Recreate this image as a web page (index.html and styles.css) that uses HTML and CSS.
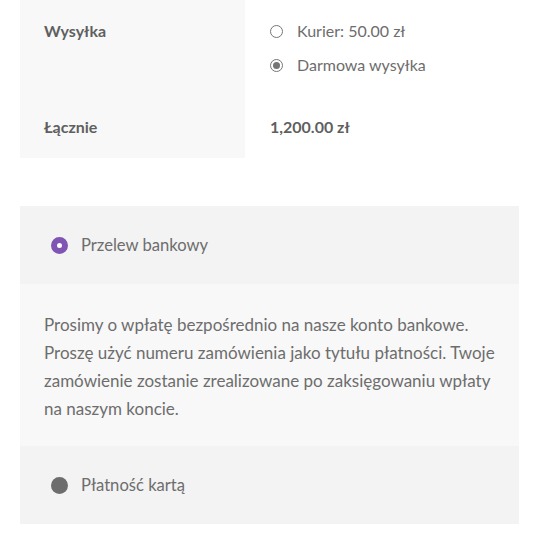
FILE: index.html
```html
<!DOCTYPE html>
<html lang="pl">
<head>
<meta charset="utf-8">
<link rel="stylesheet" href="styles.css">
</head>
<body>
<div class="page">
  <table class="totals">
    <tr>
      <th>Wysyłka</th>
      <td>
        <ul class="ship">
          <li><span class="rb"></span>Kurier: 50.00 zł</li>
          <li><span class="rb on"></span>Darmowa wysyłka</li>
        </ul>
      </td>
    </tr>
    <tr>
      <th>Łącznie</th>
      <td class="total">1,200.00 zł</td>
    </tr>
  </table>

  <div class="payment">
    <div class="method"><span class="dot active"></span>Przelew bankowy</div>
    <div class="desc">Prosimy o wpłatę bezpośrednio na nasze konto bankowe.<br>Proszę użyć numeru zamówienia jako tytułu płatności. Twoje<br>zamówienie zostanie zrealizowane po zaksięgowaniu wpłaty<br>na naszym koncie.</div>
    <div class="method"><span class="dot"></span>Płatność kartą</div>
  </div>
</div>
</body>
</html>
```
FILE: styles.css
```css
html, body { margin: 0; padding: 0; background: #fff; }
body {
  font-family: Lato, "Open Sans", sans-serif;
  font-size: 16px;
  color: #6d6d6d;
}
.page { padding: 0 19px 0 20px; }
.totals {
  border-collapse: collapse;
  width: 499px;
}
.totals th {
  width: 177px;
  background: #f8f8f8;
  text-align: left;
  vertical-align: top;
  font-weight: 700;
  color: #5f5f5f;
  padding: 18px 24px;
  line-height: 26px;
}
.totals td {
  padding: 18px 25px;
  line-height: 26px;
  vertical-align: top;
}
.totals td.total { font-weight: 700; color: #5f5f5f; }
.ship { list-style: none; margin: 0; padding: 0; display: flex; flex-direction: column; gap: 8px; }
.ship li { display: flex; align-items: center; }
.rb {
  width: 11px; height: 11px;
  border: 1px solid #767676;
  border-radius: 50%;
  margin-right: 14px;
  box-sizing: content-box;
  position: relative;
  background: #fff;
}
.rb.on::after {
  content: "";
  position: absolute;
  left: 2px; top: 2px;
  width: 7px; height: 7px;
  border-radius: 50%;
  background: #767676;
}
.payment {
  margin-top: 48px;
  width: 499px;
}
.method {
  background: #f3f3f3;
  padding: 26px 31px;
  line-height: 26px;
  font-size: 16.6px;
  display: flex;
  align-items: center;
}
.dot {
  width: 17px; height: 17px;
  border-radius: 50%;
  background: #6d6d6d;
  margin-right: 13px;
  box-sizing: border-box;
}
.dot.active {
  background: #fff;
  border: 6px solid #7f54b3;
}
.desc {
  background: #f8f8f8;
  padding: 27px 24px 23px;
  line-height: 28px;
  font-size: 17px;
  white-space: nowrap;
}
```
